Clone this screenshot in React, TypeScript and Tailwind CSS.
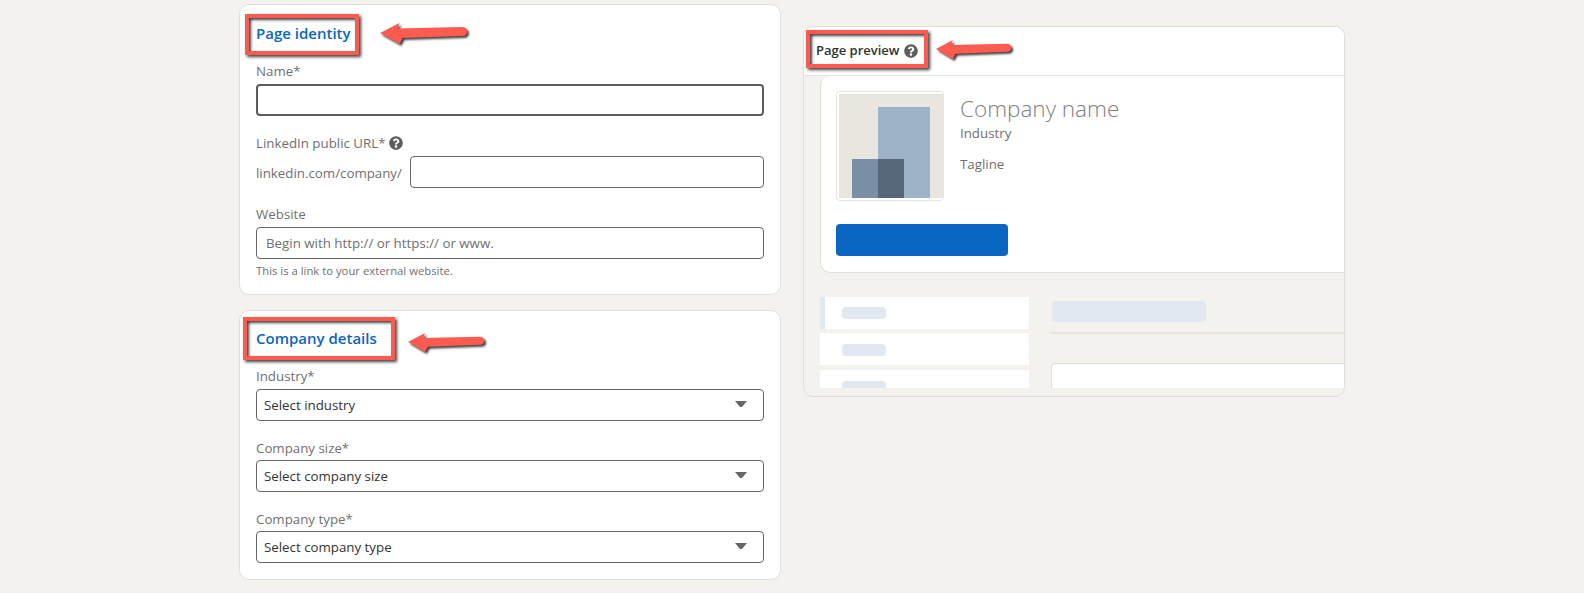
import { FaQuestionCircle } from "react-icons/fa";

const font = "font-['Open_Sans','Noto_Sans',sans-serif]";

function Callout({ className }: { className: string }) {
    return (
        <div
            className={`absolute border-4 border-[#fd5a50] shadow-[2px_2px_3px_rgba(0,0,0,0.75),inset_2px_2px_3px_rgba(0,0,0,0.75)] ${className}`}
        />
    );
}

function Arrow({ className }: { className: string }) {
    return (
        <svg
            viewBox="0 0 86 22"
            preserveAspectRatio="none"
            className={`absolute overflow-visible drop-shadow-[2px_2px_1px_rgba(0,0,0,0.75)] ${className}`}
        >
            <path
                d="M0 10 L19 0 L17 5.5 L80 4 Q85 4 85 8.5 Q85 13 80 13 L22 15 L19 21 Z"
                fill="#fd5a50"
            />
        </svg>
    );
}

function Label({ children, className = "mb-[3px]" }: { children: React.ReactNode; className?: string }) {
    return <div className={`h-5 text-[13.3px] leading-5 text-[#707070] ${className}`}>{children}</div>;
}

function Help({ className }: { className?: string }) {
    return <FaQuestionCircle className={`h-[14px] w-[14px] text-[#5e5e5e] ${className ?? ""}`} />;
}

function SelectField({ label, text, className, labelGap }: { label: string; text: string; className: string; labelGap: string }) {
    return (
        <div className={className}>
            <Label className={labelGap}>{label}</Label>
            <div className="relative">
                <select className="h-8 w-full appearance-none rounded border border-[#666] bg-white pl-[7px] pt-[2px] text-[13.3px] text-[#333] outline-none">
                    <option>{text}</option>
                </select>
                {/* Caret */}
                <svg viewBox="0 0 12 6" className="absolute right-[17px] top-[12px] h-[6px] w-3">
                    <path d="M0 0 H12 L7 6 H5 Z" fill="#666" />
                </svg>
            </div>
        </div>
    );
}

function Pill() {
    return <div className="h-3 w-11 rounded-sm bg-[#e1e8ef]" />;
}

function Preview() {
    return (
        <div className="relative ml-[22px] mt-[26px] h-[371px] w-[542px] overflow-hidden rounded-[10px] border border-[#e0dfdc] bg-[#f3f2ef]">
            <div className="flex h-[49px] items-center gap-[5px] border-b border-[#e6e5e2] bg-white pl-3">
                <span className="text-[13px] font-semibold text-[#333]">Page preview</span>
                <Help />
            </div>

            {/* Company card */}
            <div className="ml-4 h-[197px] rounded-l-[10px] border-b border-l border-[#e0dfdc] bg-white pl-[15px] pt-[15px]">
                <div className="flex">
                    <div className="h-[110px] w-[108px] rounded-sm border border-[#e6e5e2] p-[2px]">
                        <svg viewBox="0 0 104 104" className="h-[104px] w-[104px]">
                            <rect width="104" height="104" fill="#e9e5df" />
                            <rect x="39" y="13" width="52" height="91" fill="#9db3c8" />
                            <rect x="13" y="65" width="52" height="39" fill="#788fa5" />
                            <rect x="39" y="65" width="26" height="39" fill="#56687a" />
                        </svg>
                    </div>
                    <div className="ml-4 text-[#707070]">
                        <div className="mt-[2px] text-[22.5px] font-light leading-8 text-[#808080]">Company name</div>
                        <div className="-mt-[2px] text-[13.3px] leading-5">Industry</div>
                        <div className="mt-[11px] text-[13.3px] leading-5">Tagline</div>
                    </div>
                </div>
                <div className="mt-[23px] h-8 w-[172px] rounded-sm bg-[#0a66c2]" />
            </div>

            {/* Skeleton of the page below */}
            <div className="ml-4 mt-6 flex h-[91px] overflow-hidden">
                <div className="flex w-[209px] flex-col">
                    <div className="h-8 shrink-0 border-l-[5px] border-[#e1e8ef] bg-white pl-[17px] pt-[10px]">
                        <Pill />
                    </div>
                    <div className="mt-1 h-8 shrink-0 bg-white pl-[22px] pt-[11px]">
                        <Pill />
                    </div>
                    <div className="mt-[5px] h-8 shrink-0 bg-white pl-[22px] pt-[11px]">
                        <Pill />
                    </div>
                </div>
                <div className="ml-[22px] flex-1">
                    <div className="ml-px mt-[4px] h-[21px] w-[154px] rounded-sm bg-[#e1e8ef]" />
                    <div className="mt-[10px] h-[2px] bg-[#e8e6e1]" />
                    <div className="mt-[29px] h-8 rounded-tl-sm border border-r-0 border-[#e0dfdc] bg-white" />
                </div>
            </div>

            <Callout className="left-[2px] top-[3px] h-[38px] w-[122px]" />
            <Arrow className="left-[132px] top-[13px] h-[20px] w-[76px]" />
        </div>
    );
}

export default function App() {
    return (
        <div className={`flex h-[593px] overflow-hidden bg-[#f3f2ef] pl-[239px] ${font}`}>
            <div className="mt-[4px] w-[542px]">
                {/* Page identity */}
                <section className="relative h-[291px] rounded-[10px] border border-[#e0dfdc] bg-white px-4 pt-4">
                    <h2 className="mb-4 h-6 text-[15px] font-semibold leading-6 text-[#0a66c2]">Page identity</h2>
                    <Label>Name*</Label>
                    <input className="block h-8 w-full rounded border-2 border-[#5c5c5c] bg-white outline-none" />

                    <Label className="mt-[17px] mb-[3px] flex items-center gap-[3px]">
                        LinkedIn public URL*
                        <Help />
                    </Label>
                    <div className="flex h-8 items-center">
                        <span className="mt-[3px] w-[154px] shrink-0 text-[13.3px] text-[#707070]">linkedin.com/company/</span>
                        <input className="h-8 flex-1 rounded border border-[#666] bg-white outline-none" />
                    </div>

                    <Label className="mt-4 mb-[3px]">Website</Label>
                    <input
                        placeholder="Begin with http:// or https:// or www."
                        className="block h-8 w-full rounded border border-[#666] bg-white px-[9px] text-[13.3px] outline-none placeholder:text-[#707070]"
                    />
                    <p className="mt-1 text-[11.3px] leading-4 text-[#707070]">This is a link to your external website.</p>

                    <Callout className="left-[5px] top-[9px] h-[41px] w-[114px]" />
                    <Arrow className="left-[140px] top-[18px] h-[22px] w-[88px]" />
                </section>

                {/* Company details */}
                <section className="relative mt-[15px] h-[270px] rounded-[10px] border border-[#e0dfdc] bg-white px-4 pt-[15px]">
                    <h2 className="mb-4 h-6 text-[15px] font-semibold leading-6 text-[#0a66c2]">Company details</h2>
                    <SelectField label="Industry*" text="Select industry" className="" labelGap="mb-[3px]" />
                    <SelectField label="Company size*" text="Select company size" className="mt-[17px]" labelGap="mb-[2px]" />
                    <SelectField label="Company type*" text="Select company type" className="mt-[17px]" labelGap="mb-[2px]" />

                    <Callout className="left-[3px] top-[6px] h-[43px] w-[152px]" />
                    <Arrow className="left-[168px] top-[22px] h-[20px] w-[77px]" />
                </section>
            </div>

            <Preview />
        </div>
    );
}
